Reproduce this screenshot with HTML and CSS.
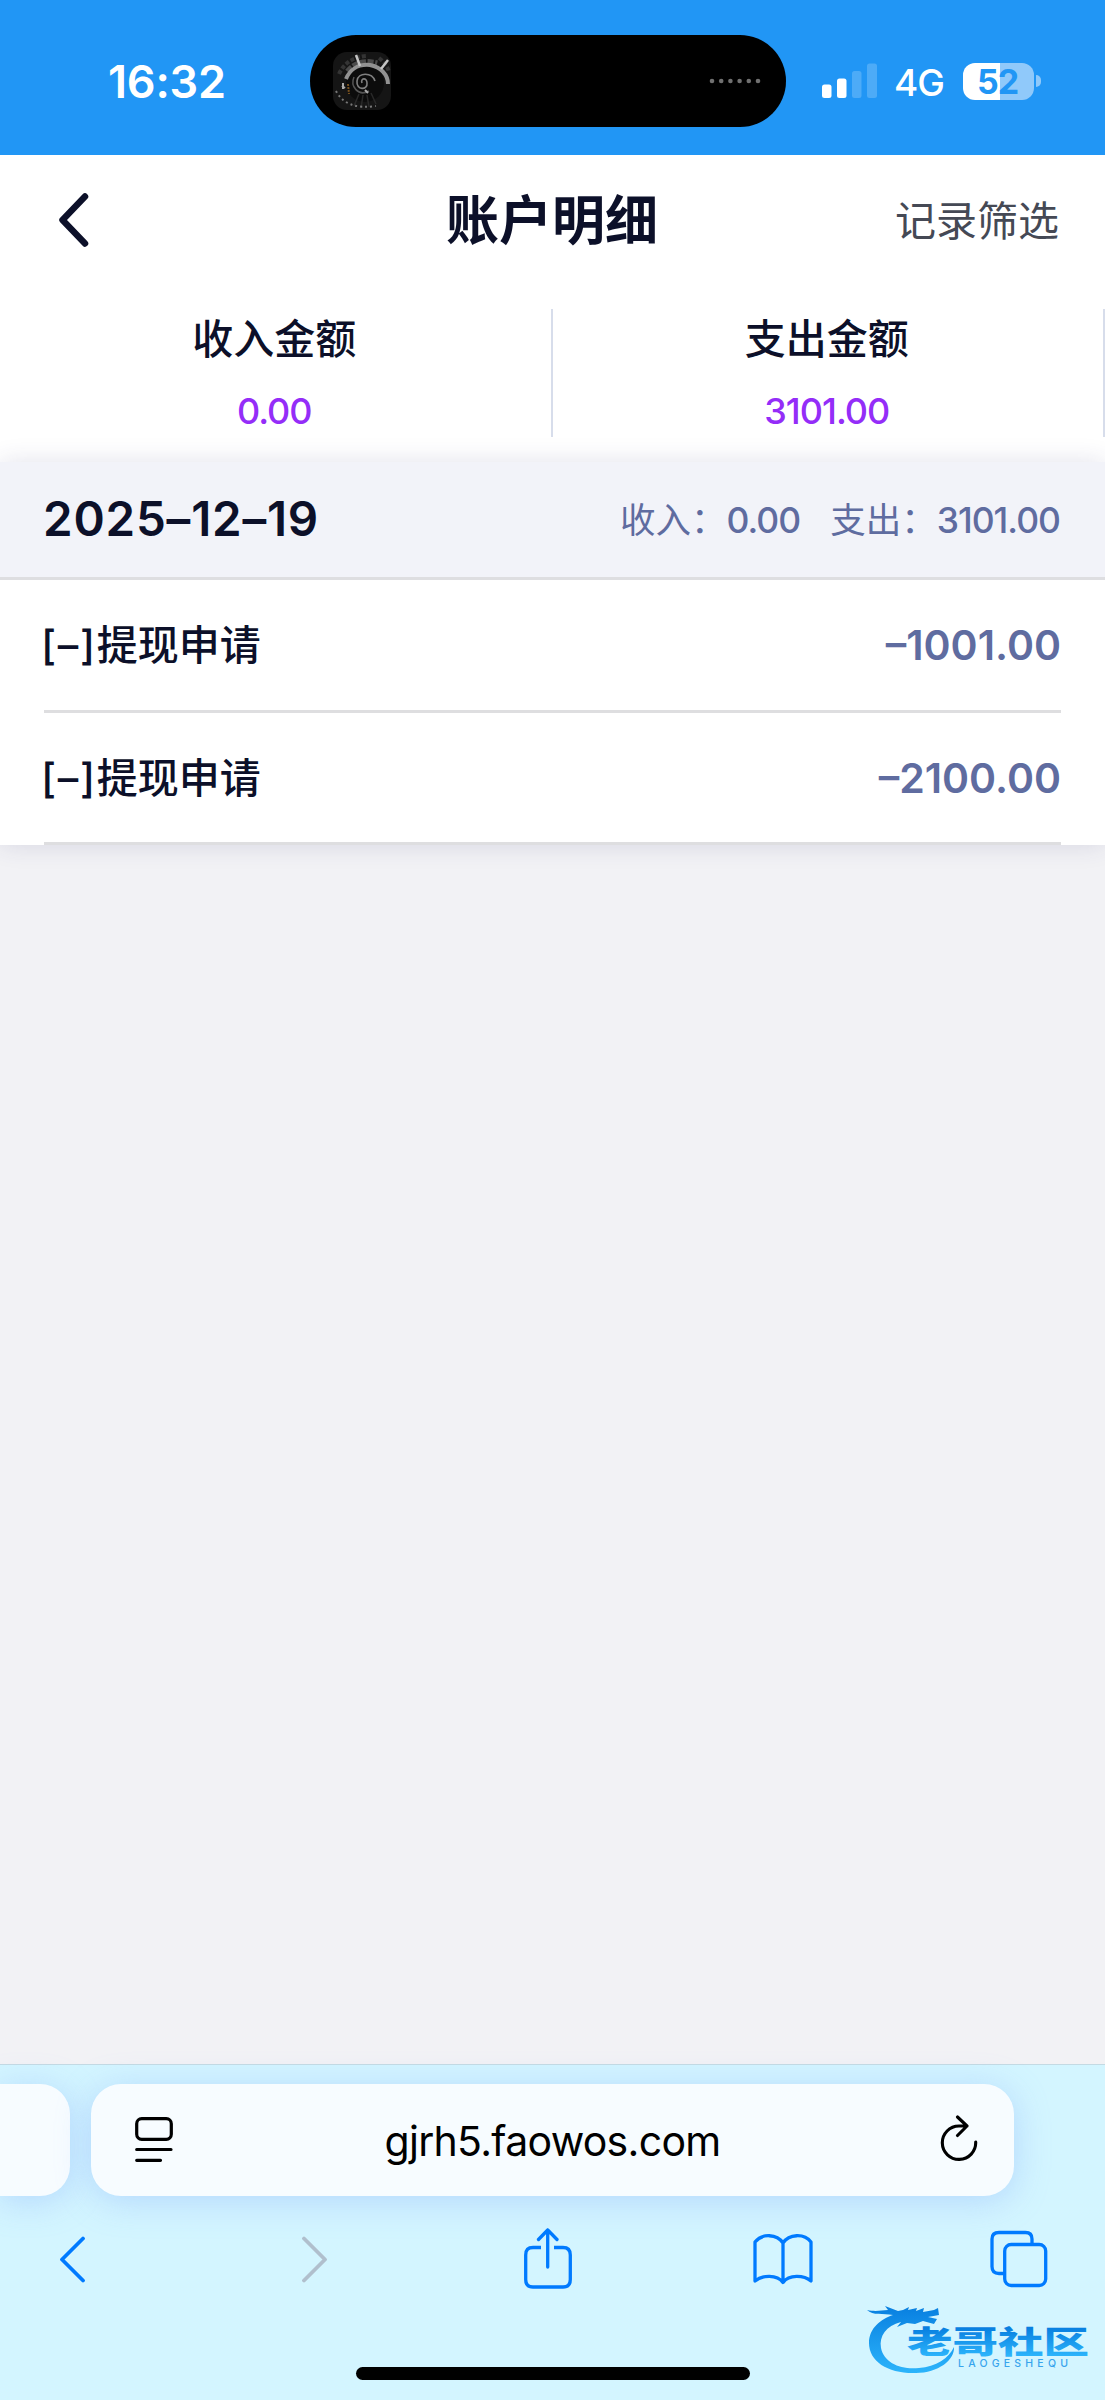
FILE: index.html
```html
<!DOCTYPE html>
<html lang="zh-CN">
<head>
<meta charset="utf-8">
<title>账户明细</title>
<link rel="stylesheet" href="styles.css">
</head>
<body>
<div class="screen">
  <header class="status">
    <div class="status-time">16:32</div>
    <div class="island">
      <svg class="cover" viewBox="0 0 58 58" width="58" height="58">
        <rect width="58" height="58" rx="14" fill="#151515"/>
        <g fill="none">
          <path d="M6 22Q14 5 34 4M46 6Q54 12 56 20" stroke="#343434" stroke-width="4" stroke-dasharray="4 2"/>
          <path d="M15 20Q25 7 44 12" stroke="#4b4b4b" stroke-width="7" stroke-dasharray="6 1.5"/>
          <circle cx="32" cy="31" r="19" fill="#0c0c0c"/>
          <path d="M13 27C17 17 26 12 37 13C48 15 55 23 55 32" stroke="#929292" stroke-width="4"/>
          <path d="M23 3L27 14M55 8L48 17" stroke="#c5c5c5" stroke-width="2.5"/>
          <path d="M42 29C39 20 25 20 24 29C23 39 35 38 34 31C34 25 27 26 29 31" stroke="#808080" stroke-width="1.6"/>
          <path d="M21 25C17 34 25 45 36 39" stroke="#555" stroke-width="1.5"/>
          <path d="M26 42L21 54M30 43L28 56M34 43L36 55M38 41L43 52" stroke="#292929" stroke-width="1.5"/>
          <path d="M3 39C10 52 23 57 43 54" stroke="#777" stroke-width="2" stroke-dasharray="2 3"/>
          <path d="M9 34L12 36M10 31V37M32 38L35 41" stroke="#aaa" stroke-width="2"/>
          <path d="M15 32L16 42" stroke="#76501f" stroke-width="2" stroke-dasharray="2 1"/>
        </g>
      </svg>
      <svg width="52" height="8" viewBox="0 0 52 8" fill="#707070">
        <circle cx="3" cy="4" r="2.3"/><circle cx="12.2" cy="4" r="2.3"/><circle cx="21.4" cy="4" r="2.3"/><circle cx="30.6" cy="4" r="2.3"/><circle cx="39.8" cy="4" r="2.3"/><circle cx="49" cy="4" r="2.3"/>
      </svg>
    </div>
    <svg class="signal" width="56" height="36" viewBox="0 0 56 36" fill="#fff">
      <rect x="0" y="21.5" width="9.5" height="13.5" rx="2.5"/>
      <rect x="15" y="15.500" width="9.500" height="19.500" rx="2.5"/>
      <rect x="30" y="8" width="9.500" height="27" rx="2.5" opacity=".2"/>
      <rect x="45" y="0.500" width="10" height="34.500" rx="2.5" opacity=".2"/>
    </svg>
    <div class="network">4G</div>
    <div class="battery"><div class="battery-level">52</div></div>
    <div class="battery-cap"></div>
  </header>

  <nav class="titlebar">
    <svg class="back" width="36" height="60" viewBox="0 0 36 60"><path d="M29 6.500L6.500 30L29 53.500" fill="none" stroke="#0c1029" stroke-width="6.500" stroke-linecap="round" stroke-linejoin="round"/></svg>
    <h1 class="title">账户明细</h1>
    <span class="filter">记录筛选</span>
  </nav>

  <section class="summary">
    <div class="total"><div class="total-name">收入金额</div><div class="total-value">0.00</div></div>
    <div class="total"><div class="total-name">支出金额</div><div class="total-value">3101.00</div></div>
  </section>

  <section class="day">
    <div class="day-head">
      <div class="date">2025–12–19</div>
      <div class="day-sums"><span>收入：<b>0.00</b></span><span>支出：<b>3101.00</b></span></div>
    </div>
    <div class="entry"><span class="entry-name"><i>[–]</i>提现申请</span><span class="amount">–1001.00</span></div>
    <div class="entry"><span class="entry-name"><i>[–]</i>提现申请</span><span class="amount">–2100.00</span></div>
  </section>

  <main class="blank"></main>

  <footer class="browser">
    <div class="tabs">
      <div class="pill pill-prev"></div>
      <div class="pill pill-main">
        <svg width="38" height="46" viewBox="0 0 38 46" fill="none" stroke="#000" stroke-width="3.200" stroke-linecap="round"><rect x="1.700" y="1.700" width="34.600" height="20.600" rx="5"/><path d="M1.700 32.500H36M1.700 43.300H25.500"/></svg>
        <div class="address">gjrh5.faowos.com</div>
        <svg class="reload" width="38" height="46" viewBox="0 0 38 46" fill="none" stroke="#000" stroke-width="3.100" stroke-linecap="round" stroke-linejoin="round"><path d="M27 11H19A16.700 16.700 0 1 0 35.700 27M17.500 2L27 11L17.500 20.500"/></svg>
      </div>
    </div>
    <div class="tools">
      <div class="tool"><svg width="28" height="48" viewBox="0 0 28 48" fill="none" stroke="#007aff" stroke-width="3.800" stroke-linecap="round" stroke-linejoin="round"><path d="M24 3.500L3 24.500L24 45.500"/></svg></div>
      <div class="tool"><svg class="forward" width="28" height="48" viewBox="0 0 28 48" fill="none" stroke="#b0bfcd" stroke-width="3.800" stroke-linecap="round" stroke-linejoin="round"><path d="M4 3.500L25 24.500L4 45.500"/></svg></div>
      <div class="tool"><svg class="share" width="48" height="62" viewBox="0 0 48 62" fill="none" stroke="#007aff" stroke-width="3.300" stroke-linecap="round" stroke-linejoin="round"><path stroke-linecap="butt" d="M17 19.500H9Q1.700 19.500 1.700 27V51.500Q1.700 59 9 59H39Q46.300 59 46.300 51.500V27Q46.300 19.500 39 19.500H30"/><path d="M23.700 39V2M14.500 11.500L23.700 2L33 11.500"/></svg></div>
      <div class="tool"><svg width="60" height="52" viewBox="0 0 60 52" fill="none" stroke="#007aff" stroke-width="3.300" stroke-linecap="round" stroke-linejoin="round"><path d="M30 10C24 1 9 0 2 9V48C9 42 24 41 30 49.500C36 41 51 42 58 48V9C51 0 36 1 30 10ZM30 10V49"/></svg></div>
      <div class="tool"><svg width="58" height="58" viewBox="0 0 58 58" fill="none" stroke="#007aff" stroke-width="3.300"><path d="M42 13V9Q42 2.500 35.500 2.500H9Q2 2.500 2 9V36.500Q2 43.500 9 43.500H14"/><rect x="14.700" y="14.500" width="41" height="41" rx="6.500"/></svg></div>
    </div>
    <div class="home"></div>
    <svg class="watermark" width="225" height="80" viewBox="0 0 225 80">
      <defs><linearGradient id="sea" x1="0" y1="0" x2="0" y2="1"><stop offset="0" stop-color="#087fe0"/><stop offset="1" stop-color="#2cb4fb"/></linearGradient>
      <linearGradient id="word" gradientUnits="userSpaceOnUse" x1="0" y1="29" x2="0" y2="57"><stop offset="0" stop-color="#087fe0"/><stop offset="1" stop-color="#2cb4fb"/></linearGradient></defs>
      <path fill="url(#sea)" d="M0 11C10 13 14 11 21 11L18 7L31 12L36 11L42 8L41 11L50 9L49 12L57 9L56 13L67 11L71 9L72 16L61 18L70 20L67 25L56 22L48 25L40 24L30 28L34 23C19 27 12 37 14 49C17 64 34 71 52 69C69 68 82 59 87 48C88 61 71 74 49 74C22 75 2 63 2 44C2 29 14 20 26 16C16 14 6 17 0 11Z"/>
      <text class="wm-name" x="40" y="54" textLength="182" lengthAdjust="spacingAndGlyphs" fill="url(#word)">老哥社区</text>
      <text class="wm-latin" x="91" y="67.500" textLength="110" fill="#37a4ed">LAOGESHEQU</text>
    </svg>
  </footer>
</div>
</body>
</html>
```
FILE: styles.css
```css
body {
  margin: 0;
  font-family: Inter, "Noto Sans CJK SC", sans-serif;
  color: #0c1029;
}
.screen {
  width: 1105px;
  height: 2400px;
  display: flex;
  flex-direction: column;
  overflow: hidden;
  background: #f2f2f5;
}
.status {
  height: 155px;
  flex: none;
  box-sizing: border-box;
  display: flex;
  align-items: center;
  padding-top: 7px;
  background: #2196f5;
  color: #fff;
}
.status-time {
  width: 202px;
  padding-left: 108px;
  font-size: 45px;
  font-weight: 600;
  letter-spacing: -0.2px;
}
.island {
  flex: none;
  width: 476px;
  height: 92px;
  box-sizing: border-box;
  padding: 0 25px 0 23px;
  border-radius: 46px;
  background: #000;
  display: flex;
  align-items: center;
  justify-content: space-between;
}
.signal { flex: none; margin-left: 36px; }
.network {
  width: 51px;
  margin-left: 16px;
  padding-top: 2px;
  font-size: 37px;
  font-weight: 500;
  letter-spacing: -1px;
  white-space: nowrap;
}
.battery {
  flex: none;
  width: 71px;
  height: 37px;
  margin-left: 18px;
  border-radius: 12px;
  background: linear-gradient(90deg, #fff 37px, #90c9fa 37px);
  color: #2196f5;
}
.battery-level {
  padding-right: 2px;
  text-align: center;
  font-size: 34px;
  line-height: 38px;
  font-weight: 700;
  letter-spacing: -1px;
}
.battery-cap {
  width: 5px;
  height: 12px;
  margin-left: 2px;
  border-radius: 0 6px 6px 0;
  background: #90c9fa;
}
.titlebar {
  height: 130px;
  flex: none;
  display: grid;
  grid-template-columns: 1fr auto 1fr;
  align-items: center;
  padding: 0 46px 0 56px;
  background: #fff;
}
.title {
  margin: 2px 0 0 -11px;
  font-size: 53px;
  line-height: 70px;
  font-weight: 600;
}
.filter {
  justify-self: end;
  padding-top: 2px;
  font-size: 41px;
  line-height: 60px;
  color: #454955;
}
.summary {
  height: 177px;
  flex: none;
  box-sizing: border-box;
  display: flex;
  padding-top: 24px;
  background: #fff;
}
.total {
  width: 552.5px;
  height: 128px;
  box-sizing: border-box;
  padding-right: 2px;
  border-right: 2.5px solid #d7ddeb;
  text-align: center;
}
.total-name {
  font-size: 41px;
  line-height: 60px;
  font-weight: 500;
}
.total-value {
  margin-top: 17px;
  font-size: 36px;
  line-height: 50px;
  font-weight: 450;
  letter-spacing: -1px;
  color: #942df8;
}
.day {
  flex: none;
  background: #fff;
  box-shadow: 0 0 24px rgba(50, 50, 110, 0.14);
}
.day-head {
  height: 118px;
  box-sizing: border-box;
  display: flex;
  align-items: center;
  justify-content: space-between;
  padding: 0 45px 0 43px;
  border-bottom: 3px solid #dedee1;
  background: #f2f3f9;
}
.date {
  padding-bottom: 2px;
  font-size: 47.5px;
  font-weight: 600;
  letter-spacing: 0.8px;
}
.day-sums {
  display: flex;
  gap: 30px;
  padding-bottom: 5px;
  font-size: 35.5px;
  color: #5f6ca0;
}
.day-sums b {
  font-weight: 450;
  letter-spacing: -1px;
}
.entry {
  height: 133px;
  box-sizing: border-box;
  margin: 0 44px;
  display: flex;
  align-items: center;
  justify-content: space-between;
  border-bottom: 3px solid #dedee0;
}
.entry:last-child { height: 132px; }
.entry-name {
  margin-left: -3px;
  padding-bottom: 6px;
  font-size: 41px;
  font-weight: 500;
}
.entry-name i {
  font-style: normal;
  font-weight: 450;
  letter-spacing: 1.7px;
}
.amount {
  font-size: 41px;
  font-weight: 600;
  color: #5f6ca0;
}
.blank { flex: 1; }
.browser {
  position: relative;
  height: 336px;
  flex: none;
  box-sizing: border-box;
  border-top: 1px solid #c4dae3;
  background: #d3f5ff;
}
.tabs {
  display: flex;
  gap: 21px;
  padding-top: 19px;
}
.pill {
  height: 112px;
  box-sizing: border-box;
  background: #f7fcff;
  box-shadow: 0 5px 34px rgba(135, 175, 250, 0.42);
}
.pill-prev {
  width: 70px;
  border-radius: 0 30px 30px 0;
}
.pill-main {
  width: 923px;
  border-radius: 30px;
  display: flex;
  align-items: center;
  justify-content: space-between;
  padding: 0 36px 0 44px;
}
.address {
  margin: 2px 8px 0 0;
  font-size: 41px;
  letter-spacing: -0.7px;
  color: #000;
}
.reload { margin-bottom: 5px; }
.tools {
  height: 62px;
  margin-top: 32px;
  display: flex;
  align-items: center;
  justify-content: space-between;
  padding: 0 56px 0 43px;
}
.tool {
  width: 60px;
  display: flex;
  justify-content: center;
}
.forward { margin-left: 9px; }
.share { margin-left: 3px; }
.home {
  width: 394px;
  height: 13px;
  margin: 77px 0 0 356px;
  border-radius: 7px;
  background: #000;
}
.watermark {
  position: absolute;
  left: 867px;
  top: 234px;
}
.wm-name {
  font: 900 31px "Noto Sans CJK SC", sans-serif;
}
.wm-latin {
  font: 500 10.5px Inter, sans-serif;
}
```
